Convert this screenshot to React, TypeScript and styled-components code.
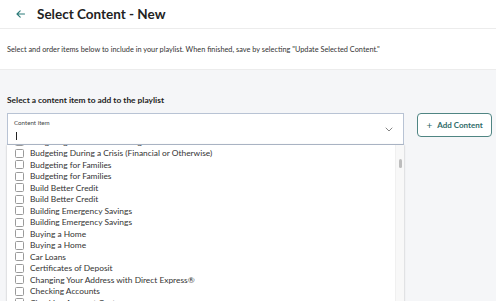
import React from "react";
import styled, { createGlobalStyle } from "styled-components";

const topics = [
  "Budgeting Basics and Planning",
  "Budgeting During a Crisis (Financial or Otherwise)",
  "Budgeting for Families",
  "Budgeting for Families",
  "Build Better Credit",
  "Build Better Credit",
  "Building Emergency Savings",
  "Building Emergency Savings",
  "Buying a Home",
  "Buying a Home",
  "Car Loans",
  "Certificates of Deposit",
  "Changing Your Address with Direct Express®",
  "Checking Accounts",
  "Checking Account Costs",
  "Checking Account Costs",
  "Choosing a Bank",
];

export default function App() {
  return (
    <>
      <GlobalStyle />
      <Page>
        <Header>
          <BackButton aria-label="Back">
            <svg width="9" height="8" viewBox="0 0 9 8" fill="none">
              <path
                d="M8.5 4H1M4.2 0.8L1 4l3.2 3.2"
                stroke="#2b7a78"
                strokeWidth="1.1"
                strokeLinecap="round"
                strokeLinejoin="round"
              />
            </svg>
          </BackButton>
          <Title>Select Content - New</Title>
        </Header>
        <Intro>
          Select and order items below to include in your playlist. When
          finished, save by selecting "Update Selected Content."
        </Intro>
        <Body>
          <SectionTitle>Select a content item to add to the playlist</SectionTitle>
          <PickerRow>
            <Combo>
              <Field>
                <FieldText>
                  <FieldLabel>Content item</FieldLabel>
                  <Caret />
                </FieldText>
                <svg width="8" height="5" viewBox="0 0 8 5" fill="none">
                  <path
                    d="M1 1l3 3 3-3"
                    stroke="#777"
                    strokeWidth="0.9"
                    strokeLinecap="round"
                    strokeLinejoin="round"
                  />
                </svg>
              </Field>
              <Menu>
                <Options>
                  {topics.map((t, i) => (
                    <Option key={i}>
                      <Box />
                      <span>{t}</span>
                    </Option>
                  ))}
                </Options>
                <Track>
                  <Thumb />
                </Track>
              </Menu>
            </Combo>
            <AddButton>
              <span>+</span>
              Add Content
            </AddButton>
          </PickerRow>
        </Body>
      </Page>
    </>
  );
}

const GlobalStyle = createGlobalStyle`
  html, body {
    margin: 0;
    padding: 0;
    height: 100%;
    overflow: hidden;
    background: #f5f6f8;
  }
  body {
    font-family: Lato, "Open Sans", sans-serif;
    color: #222;
  }
  #root {
    height: 100%;
  }
`;

const Page = styled.div`
  display: flex;
  flex-direction: column;
  height: 100%;
`;

const Header = styled.header`
  height: 27px;
  display: flex;
  align-items: center;
  gap: 12px;
  padding: 0 0 1px 16px;
  background: #fff;
  border-bottom: 1px solid #ececec;
`;

const BackButton = styled.button`
  display: flex;
  align-items: center;
  padding: 0;
  border: 0;
  background: transparent;
`;

const Title = styled.h1`
  margin: 0;
  font-size: 13.5px;
  font-weight: 700;
  color: #222;
`;

const Intro = styled.p`
  margin: 0;
  height: 40px;
  display: flex;
  align-items: center;
  padding: 0 7px;
  background: #fff;
  border-bottom: 1px solid #ececec;
  font-size: 7.35px;
  color: #333;
`;

const Body = styled.main`
  padding: 25px 4px 0 7px;
`;

const SectionTitle = styled.h2`
  margin: 0 0 8px;
  font-size: 8.4px;
  font-weight: 700;
  color: #222;
`;

const PickerRow = styled.div`
  display: flex;
  align-items: flex-start;
  gap: 13px;
`;

const Combo = styled.div`
  position: relative;
  flex: 1;
`;

const Field = styled.div`
  height: 30px;
  display: flex;
  align-items: center;
  justify-content: space-between;
  padding: 0 10px 0 6px;
  background: #fff;
  border: 1px solid #b8c3d4;
`;

const FieldText = styled.div`
  align-self: stretch;
  display: flex;
  flex-direction: column;
  gap: 6px;
  padding-top: 5px;
`;

const FieldLabel = styled.span`
  font-size: 6.2px;
  color: #444;
`;

const Caret = styled.span`
  width: 1px;
  height: 8px;
  margin-left: 2px;
  background: #222;
`;

const Menu = styled.div`
  position: absolute;
  top: 32px;
  left: 0;
  right: 0;
  height: 200px;
  display: flex;
  background: #fff;
  box-shadow: 0 0 2px rgba(0, 0, 0, 0.25);
  overflow: hidden;
`;

const Options = styled.ul`
  flex: 1;
  margin: -9px 0 0;
  padding: 0 0 0 7px;
  list-style: none;
`;

const Option = styled.li`
  height: 11.5px;
  display: flex;
  align-items: center;
  gap: 6px;
  font-size: 8.4px;
  color: #333;
  white-space: nowrap;
`;

const Box = styled.span`
  width: 7px;
  height: 7px;
  margin-left: 1px;
  border: 1px solid #9a9a9a;
  border-radius: 1.5px;
  background: #fff;
`;

const Track = styled.div`
  width: 8px;
  padding-top: 14px;
  display: flex;
  justify-content: center;
  background: #f8f8f8;
  border-left: 1px solid #f0f0f0;
`;

const Thumb = styled.div`
  width: 3px;
  height: 9px;
  border-radius: 2px;
  background: #bdbdbd;
`;

const AddButton = styled.button`
  width: 75px;
  height: 24px;
  display: flex;
  align-items: center;
  justify-content: center;
  gap: 5px;
  padding: 0;
  background: #fff;
  border: 1px solid #4f8583;
  border-radius: 4px;
  font-family: Lato, "Open Sans", sans-serif;
  font-size: 8px;
  font-weight: 700;
  color: #2f6b69;

  span {
    font-size: 10px;
    font-weight: 400;
  }
`;
